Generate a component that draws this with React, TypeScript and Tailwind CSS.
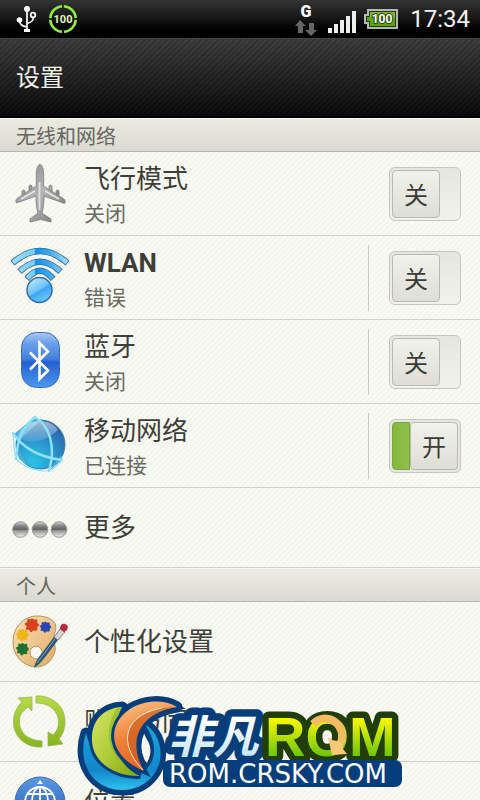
import { useState } from "react";
import type { ReactNode } from "react";

interface ISettingItem {
  id: string;
  title: string;
  status?: string;
  icon: ReactNode;
  toggle?: boolean;
  divider?: boolean;
}

interface IPropsSettingRow {
  item: ISettingItem;
  isOn: boolean;
  onToggle: (id: string) => void;
}

const iconClass = "w-14 h-14 shrink-0 overflow-visible";

function AirplaneIcon() {
  return (
    <svg viewBox="0 0 56 56" className={iconClass} aria-hidden="true">
      <defs>
        <linearGradient id="plane" x1="0" y1="0" x2="1" y2="1">
          <stop offset="0" stopColor="#858585" />
          <stop offset="0.5" stopColor="#b4b4b4" />
          <stop offset="1" stopColor="#747474" />
        </linearGradient>
      </defs>
      <g fill="url(#plane)" stroke="#7c7c7c" strokeWidth="0.800" strokeLinejoin="round">
        <path d="M17 20q1.500-2 3 0v7h-3zM10 25q1.500-2 3 0v6h-3zM37 20q1.500-2 3 0v7h-3zM44 25q1.500-2 3 0v6h-3z" />
        <path d="M28-2c2.500 1.500 3.600 5 3.600 10v12L52 33c1.500 1.500 1.500 3 .5 4.500L32 30c0 7-.6 12-2 17l9 6v3l-10.500-2.500L18 56v-3l8-6c-1.500-5-2-10-2-17L4.500 37c-1-1.500-.8-3 .5-4.500L24.300 20V8c0-5 1.200-8.500 3.700-10z" />
      </g>
      <path d="M27.500 16v28" stroke="#e2e2e2" strokeWidth="1.800" />
      <path d="M23 25 9 33M33 25l14 8" stroke="#e3e3e3" strokeWidth="2" />
    </svg>
  );
}

function WlanIcon() {
  const arcs = "M3 11Q28-9 53 11M10 19.500Q28 4 46 19.500M17 26.500Q28 15 39 26.500";
  return (
    <svg viewBox="0 0 56 56" className={iconClass} aria-hidden="true">
      <defs>
        <linearGradient id="wave" gradientUnits="userSpaceOnUse" x1="0" y1="0" x2="56" y2="0">
          <stop offset="0" stopColor="#9edcff" />
          <stop offset="0.4" stopColor="#7accfa" />
          <stop offset="0.42" stopColor="#1591e6" />
          <stop offset="0.65" stopColor="#3aa6ef" />
          <stop offset="1" stopColor="#a5defc" />
        </linearGradient>
        <linearGradient id="ball" x1="0.2" y1="0" x2="0.8" y2="1">
          <stop offset="0" stopColor="#c5ebff" />
          <stop offset="0.5" stopColor="#67bffb" />
          <stop offset="0.52" stopColor="#3fa5f5" />
          <stop offset="1" stopColor="#6fd0ff" />
        </linearGradient>
      </defs>
      <g fill="none" strokeLinecap="square">
        <path d={arcs} stroke="#356a9a" strokeWidth="6.400" />
        <path d={arcs} stroke="url(#wave)" strokeWidth="4.800" />
      </g>
      <circle cx="27.500" cy="40" r="12.500" fill="url(#ball)" stroke="#2f6da5" strokeWidth="1.500" />
    </svg>
  );
}

function BluetoothIcon() {
  return (
    <svg viewBox="0 0 56 56" className={iconClass} aria-hidden="true">
      <defs>
        <linearGradient id="bt" x1="0" y1="0" x2="0" y2="1">
          <stop offset="0" stopColor="#a9c9f5" />
          <stop offset="0.2" stopColor="#6a9fe9" />
          <stop offset="0.48" stopColor="#4480df" />
          <stop offset="0.54" stopColor="#2460cf" />
          <stop offset="1" stopColor="#4c98f2" />
        </linearGradient>
      </defs>
      <rect x="9.500" y="-1.500" width="38" height="55" rx="15" fill="url(#bt)" stroke="#3f6eb5" />
      <path
        d="M18 18.500 36 36.500 27.500 45V9L36 17.500 18 35.500"
        fill="none"
        stroke="#ffffff"
        strokeWidth="2.600"
      />
    </svg>
  );
}

function GlobeIcon() {
  return (
    <svg viewBox="0 0 56 56" className={iconClass} aria-hidden="true">
      <defs>
        <radialGradient id="globe" cx="0.35" cy="0.85" r="0.95">
          <stop offset="0" stopColor="#2cc3e2" />
          <stop offset="0.45" stopColor="#2b97cf" />
          <stop offset="0.8" stopColor="#2b6fb0" />
          <stop offset="1" stopColor="#20528c" />
        </radialGradient>
        <linearGradient id="globeShine" x1="0" y1="0" x2="0" y2="1">
          <stop offset="0" stopColor="#ffffff" stopOpacity="0.55" />
          <stop offset="1" stopColor="#ffffff" stopOpacity="0.1" />
        </linearGradient>
      </defs>
      <circle cx="28.500" cy="26.500" r="24.500" fill="url(#globe)" stroke="#3a7dae" />
      <path d="M2 16 23-1l5 4L5 24zM4 27l3 14 8 5M37 53l13-11-1-5" fill="#49aed6" />
      <path d="M5 19C9 8 18 3 28 3c9 0 15 4 18 9-9 9-26 17-41 7z" fill="url(#globeShine)" />
      <g fill="none" stroke="#8fe3f8" strokeWidth="2.400" strokeLinecap="round" strokeLinejoin="round">
        <path d="M23-1C38 8 44 29 37 53" />
        <path d="M23-1C11 8 5 22 4 41" />
        <path d="M1 15c9 14 25 24 49 27" />
        <path d="M1 15C2 26 2 33 4 41c8 8 20 12 33 12 6-3 10-7 13-11" strokeWidth="1.200" />
      </g>
    </svg>
  );
}

function MoreIcon() {
  return (
    <svg viewBox="0 0 56 56" className={iconClass} aria-hidden="true">
      <defs>
        <linearGradient id="dot" x1="0" y1="0" x2="0" y2="1">
          <stop offset="0" stopColor="#d9d9d9" />
          <stop offset="0.25" stopColor="#8a8a8a" />
          <stop offset="0.5" stopColor="#636363" />
          <stop offset="0.55" stopColor="#8f8f8f" />
          <stop offset="1" stopColor="#f0f0f0" />
        </linearGradient>
      </defs>
      <g fill="url(#dot)" stroke="#999999">
        <circle cx="8.500" cy="29.500" r="7.800" />
        <circle cx="28" cy="29.500" r="7.800" />
        <circle cx="47" cy="29.500" r="7.800" />
      </g>
    </svg>
  );
}

function PaletteIcon() {
  const blob =
    "M0-6 2-4.500 4.500-5 4.500-2 6.500 0 4.500 2 4.500 5 1.500 4.500-1 6.500-2.500 4-5.500 4-4.500 1-6.500-1-4-2.500-4-5.500-1.500-4.500z";
  return (
    <svg viewBox="0 0 56 56" className={iconClass} aria-hidden="true">
      <defs>
        <linearGradient id="wood" x1="0" y1="0" x2="1" y2="1">
          <stop offset="0" stopColor="#fae3b8" />
          <stop offset="1" stopColor="#e0aa62" />
        </linearGradient>
      </defs>
      <path
        fillRule="evenodd"
        d="M25 2c9 0 17 3 18.500 9 1.500 7-3 10-2 15 .7 4 2.500 6 1.500 11-2 9-9 16-19 16C10 52 1 41 1 28 1 13 12 2 25 2zm-1 30a6.500 6.500 0 1 0 1 13c4-.5 6-4 5-8-1-3-3-5-6-5z"
        fill="url(#wood)"
        stroke="#b8935f"
      />
      <g strokeWidth="1.500" strokeLinejoin="round">
        <path d={blob} transform="translate(20 11)" fill="#d8401f" stroke="#d8401f" />
        <path d={blob} transform="translate(33.500 13) scale(.8)" fill="#2743b4" stroke="#2743b4" />
        <path d={blob} transform="translate(10.500 21) scale(.9)" fill="#f0b71c" stroke="#f0b71c" />
        <path d={blob} transform="translate(10.500 35) scale(.9)" fill="#1e7131" stroke="#1e7131" />
      </g>
      <path d="M22 54c1-5 3-9 8-15l12-16 4 3-12 16c-4 5-7 9-12 12z" fill="#2d5677" />
      <path d="M25 49 43 25" stroke="#7fa5c0" strokeWidth="1" />
      <path d="m42 23 6-8 5 3-7 8z" fill="#d3d3d3" stroke="#6d6d6d" strokeWidth="0.800" />
      <path d="M48 15c0-4 2-6 5-5s4 4 1 7l-2 1z" fill="#b62b3d" />
    </svg>
  );
}

function SyncIcon() {
  return (
    <svg viewBox="0 0 56 56" className={iconClass} aria-hidden="true">
      <defs>
        <linearGradient id="sync" x1="0" y1="0" x2="0" y2="1">
          <stop offset="0" stopColor="#b4dc45" />
          <stop offset="1" stopColor="#85b51e" />
        </linearGradient>
      </defs>
      <g fill="url(#sync)" stroke="#9db35c" strokeWidth="0.800" strokeLinejoin="round">
        <path d="M6 4l14-1v14l-4-4C9 18 7 23 7.500 29c.7 10 8 17 22.500 18v6C14 54 1.500 43 1.500 28 1.500 19 5 13 10 8z" />
        <path d="M24 2c16-1 29 10 29 25 0 8-2 13-6 18l4 5-15 2V38l5 3c4-4 5.500-8 5.500-13C46.500 17 38 9 24 9z" />
      </g>
    </svg>
  );
}

function LocationIcon() {
  return (
    <svg viewBox="0 0 56 56" className={iconClass} aria-hidden="true">
      <defs>
        <linearGradient id="loc" x1="0" y1="0" x2="0" y2="1">
          <stop offset="0" stopColor="#5d99e4" />
          <stop offset="1" stopColor="#1d52ad" />
        </linearGradient>
      </defs>
      <circle cx="28" cy="28" r="25" fill="url(#loc)" stroke="#496fa6" />
      <path d="m28 6 3 4h-6z" fill="#ffffff" />
      <g fill="none" stroke="#ffffff" strokeWidth="1.800">
        <circle cx="28" cy="28" r="15" />
        <ellipse cx="28" cy="28" rx="8" ry="15" />
        <path d="M28 13v30M13 28h30M16 20h24" />
      </g>
    </svg>
  );
}

const wirelessItems: ISettingItem[] = [
  { id: "airplane", title: "飞行模式", status: "关闭", icon: <AirplaneIcon />, toggle: true },
  { id: "wlan", title: "WLAN", status: "错误", icon: <WlanIcon />, toggle: true, divider: true },
  { id: "bluetooth", title: "蓝牙", status: "关闭", icon: <BluetoothIcon />, toggle: true, divider: true },
  { id: "mobile", title: "移动网络", status: "已连接", icon: <GlobeIcon />, toggle: true, divider: true },
  { id: "more", title: "更多", icon: <MoreIcon /> },
];

const personalItems: ISettingItem[] = [
  { id: "personalize", title: "个性化设置", icon: <PaletteIcon /> },
  { id: "accounts", title: "账户与同步", icon: <SyncIcon /> },
  { id: "location", title: "位置", icon: <LocationIcon /> },
];

function StatusBar() {
  return (
    <div className="flex items-center h-[38px] pl-4 pr-[10px] bg-linear-to-b from-[#343434] via-[#151515] to-black">
      <svg viewBox="0 0 22 28" className="w-[22px] h-7" aria-label="USB">
        <g fill="none" stroke="#f2f2f2" strokeWidth="1.800">
          <path d="M11 3v22M3.500 15c0 5 3 6 7.500 7M17 12c1 4-2 5.500-6 6.500" />
          <circle cx="17" cy="10" r="2.300" />
        </g>
        <g fill="#ffffff">
          <circle cx="11" cy="4" r="3" />
          <circle cx="3.500" cy="15" r="2.800" />
          <path d="M8 24h6v3H8z" />
        </g>
      </svg>
      <svg viewBox="0 0 30 30" className="w-[30px] h-[30px] ml-[10px]">
        <circle
          cx="15"
          cy="15"
          r="12.800"
          fill="none"
          stroke="#8fec3c"
          strokeWidth="2.600"
          pathLength="80"
          strokeDasharray="18 2"
          strokeDashoffset="-1"
        />
        <text x="15" y="19" textAnchor="middle" className="font-[Roboto,sans-serif] text-[11px] font-bold" fill="#e0f5bd">
          100
        </text>
      </svg>
      <svg viewBox="0 0 24 34" className="w-6 h-[34px] ml-auto">
        <text x="12" y="15" textAnchor="middle" className="font-[Roboto,sans-serif] text-base font-black" fill="#ffffff">
          G
        </text>
        <path d="m6 18 6 6H9v7H4v-7H1zM15 21h5v7h3l-6 6-6-6h4z" fill="#666666" />
      </svg>
      <svg viewBox="0 0 28 22" className="w-7 h-[22px] ml-[10px] mt-[6px]" aria-label="信号">
        <path d="M0 17h4v5H0zM6 13h4v9H6zM12 9h4v13h-4zM18 5h4v17h-4zM24 0h4v22h-4z" fill="#eeeeee" />
      </svg>
      <svg viewBox="0 0 34 20" className="w-[34px] h-5 ml-2">
        <path d="M4 1h29v18H4v-5H1V6h3z" fill="#253c0a" stroke="#b4b8b0" strokeWidth="2" />
        <path d="M6 3h25v14H6v-5H3V8h3z" fill="#5ba213" />
        <path d="M6 3h25v6H6z" fill="#79b638" />
        <text
          x="18"
          y="14"
          textAnchor="middle"
          className="font-[Roboto,sans-serif] text-xs font-bold"
          fill="#ffffff"
          stroke="#29480a"
          strokeWidth="2"
          paintOrder="stroke"
        >
          100
        </text>
      </svg>
      <span className="ml-3 font-[Roboto,sans-serif] text-2xl text-[#f2f2f2]">17:34</span>
    </div>
  );
}

function SectionHeader({ title }: { title: string }) {
  return (
    <h2 className="flex items-center h-[34px] px-4 pt-[3px] text-xl leading-7 text-[#65665f] bg-linear-to-b from-[#ebebe2] to-[#dadad2] border-t border-t-[#f7f7ef] border-b border-b-[#b5b6ae]">
      {title}
    </h2>
  );
}

function ToggleSwitch({ item, isOn, onToggle }: IPropsSettingRow) {
  return (
    <label
      className={`flex w-[72px] h-[54px] p-[2px] rounded-md border border-[#c6c7c0] cursor-pointer ${
        isOn ? "justify-end bg-[#e6e7df]" : "justify-start bg-linear-to-b from-[#e5e6df] to-[#f2f2ec]"
      }`}
    >
      <input
        type="checkbox"
        role="switch"
        aria-label={item.title}
        checked={isOn}
        onChange={() => onToggle(item.id)}
        className="sr-only"
      />
      {isOn && <span className="grow rounded-l border border-[#7aa63a] bg-linear-to-r from-[#84b83b] to-[#8fc04a]" />}
      <span className="flex items-center justify-center w-12 pt-1 shrink-0 rounded border border-[#b9bab3] bg-linear-to-b from-[#f1f2ec] to-[#deded7] text-2xl text-[#3b3c36]">
        {isOn ? "开" : "关"}
      </span>
    </label>
  );
}

function SettingRow(props: IPropsSettingRow) {
  const { item } = props;
  return (
    <li
      className={`flex items-center gap-4 pl-3 pr-[19px] border-b border-[#cfd0c8] ${
        item.status ? "h-[84px]" : "h-20"
      }`}
    >
      {item.icon}
      <a href={`#${item.id}`} className={`flex flex-col grow ${item.status ? "pt-1" : ""}`}>
        <span
          className={`text-[26px] text-[#3e3f39] ${item.status ? "leading-9" : "leading-10"} ${
            item.id === "wlan" ? "font-bold" : ""
          }`}
        >
          {item.title}
        </span>
        {item.status && <span className="text-[21px] leading-[34px] text-[#696a62]">{item.status}</span>}
      </a>
      {item.toggle && (
        <div className={`flex items-center h-[66px] pl-5 ${item.divider ? "border-l border-[#c9cac2]" : ""}`}>
          <ToggleSwitch {...props} />
        </div>
      )}
    </li>
  );
}

function SiteLogo() {
  const ring = "M86 733C76 764 94 790 122 790c27 0 44-24 37-47-2-8-8-15-14-19 9 14 12 28 6 39-14 25-53 18-65-30z";
  const green = "M122 707c-19 1-31 14-30 34 1 22 24 36 48 35-22-9-34-38-18-69z";
  const orange = "M177 707c-13-8-33-7-47 2-24 16-22 47 14 62-17-29-6-58 33-64z";
  return (
    <svg viewBox="76 690 330 110" className="absolute left-[76px] top-[690px] w-[330px] h-[110px]" aria-label="非凡ROM">
      <defs>
        <linearGradient id="logoRing" x1="0" y1="0" x2="0" y2="1">
          <stop offset="0" stopColor="#17a9df" />
          <stop offset="0.7" stopColor="#1286c9" />
          <stop offset="1" stopColor="#2ec2ee" />
        </linearGradient>
        <linearGradient id="logoGreen" x1="0" y1="0" x2="1" y2="1">
          <stop offset="0" stopColor="#d7e465" />
          <stop offset="0.5" stopColor="#b0cc39" />
          <stop offset="1" stopColor="#7da60f" />
        </linearGradient>
        <linearGradient id="logoOrange" x1="0.2" y1="0" x2="0.5" y2="1">
          <stop offset="0" stopColor="#fbc183" />
          <stop offset="0.5" stopColor="#ef8138" />
          <stop offset="1" stopColor="#e5601c" />
        </linearGradient>
        <linearGradient id="logoRom" x1="0" y1="0" x2="0" y2="1">
          <stop offset="0.2" stopColor="#fdfa00" />
          <stop offset="0.8" stopColor="#70c60c" />
        </linearGradient>
        <linearGradient id="logoHan" x1="0" y1="0" x2="0" y2="1">
          <stop offset="0.3" stopColor="#ffffff" />
          <stop offset="1" stopColor="#b9dff5" />
        </linearGradient>
      </defs>
      <g fill="#063e7b" stroke="#063e7b" strokeWidth="11" strokeLinejoin="round">
        <path d={ring} />
        <path d={green} />
        <path d={orange} />
      </g>
      <path d={ring} fill="url(#logoRing)" />
      <path d={green} fill="url(#logoGreen)" stroke="#063e7b" strokeWidth="6" paintOrder="stroke" />
      <path d="M116 709c-15 26-6 54 24 67-22-9-34-38-18-69z" fill="#8db71f" fillOpacity="0.6" />
      <path d={orange} fill="url(#logoOrange)" stroke="#063e7b" strokeWidth="6" paintOrder="stroke" />
      <path d="M162 708c-38 7-45 35-18 63-17-29-6-58 33-64z" fill="#c9551a" fillOpacity="0.6" />
      <path d="M162 708c-38 7-45 35-19 62" fill="none" stroke="#fff0cf" strokeWidth="1" />
      <path d="M144 736c8 8 8 18 3 27-6-9-7-18-3-27z" fill="#f7f8f2" />
      <g strokeLinejoin="round" paintOrder="stroke">
        <text
          x="168"
          y="753"
          className="font-['Noto_Sans_CJK_SC',sans-serif] text-[45px] font-bold italic"
          fill="url(#logoHan)"
          stroke="#063e7b"
          strokeWidth="15"
        >
          非凡
        </text>
        <text
          x="265"
          y="756"
          className="font-['Liberation_Sans',sans-serif] text-[56px] font-bold"
          fill="url(#logoRom)"
          stroke="#213e09"
          strokeWidth="13"
        >
          ROM
        </text>
        <path d="M313 724c8-8 20-7 26 2 4 6 4 13 1 18" fill="none" stroke="#f3bc62" strokeWidth="8" />
        <path d="m328 737 4 3 10 2 1 7 4 5-15 1z" fill="#f7c877" />
        <rect x="163" y="760" width="239" height="27" rx="7" fill="#063e7b" />
        <text x="169" y="783" className="font-['DejaVu_Sans',sans-serif] text-[26px]" fill="#ffffff">
          ROM.CRSKY.COM
        </text>
      </g>
    </svg>
  );
}

export default function App() {
  const [switches, setSwitches] = useState<Record<string, boolean>>({ mobile: true });

  const onToggle = (id: string) => setSwitches((prev) => ({ ...prev, [id]: !prev[id] }));

  const renderRows = (items: ISettingItem[]) => (
    <ul>
      {items.map((item) => (
        <SettingRow key={item.id} item={item} isOn={!!switches[item.id]} onToggle={onToggle} />
      ))}
    </ul>
  );

  return (
    <div className="relative h-screen overflow-hidden font-[Roboto,'Noto_Sans_CJK_SC',sans-serif] bg-[#f6f7f0] bg-[repeating-linear-gradient(135deg,#f9faf4_0px,#f9faf4_2px,#f4f5ed_2px,#f4f5ed_4px)]">
      <StatusBar />
      <header className="flex items-center h-20 px-4 border-t border-[#444444] border-b-2 border-b-black bg-[repeating-linear-gradient(135deg,#ffffff05_0px,#ffffff05_2px,#0000001a_2px,#0000001a_4px),linear-gradient(#3b3b3b,#080808)]">
        <h1 className="text-2xl text-[#f0f0e8]">设置</h1>
      </header>
      <main>
        <SectionHeader title="无线和网络" />
        {renderRows(wirelessItems)}
        <SectionHeader title="个人" />
        {renderRows(personalItems)}
      </main>
      <SiteLogo />
    </div>
  );
}
